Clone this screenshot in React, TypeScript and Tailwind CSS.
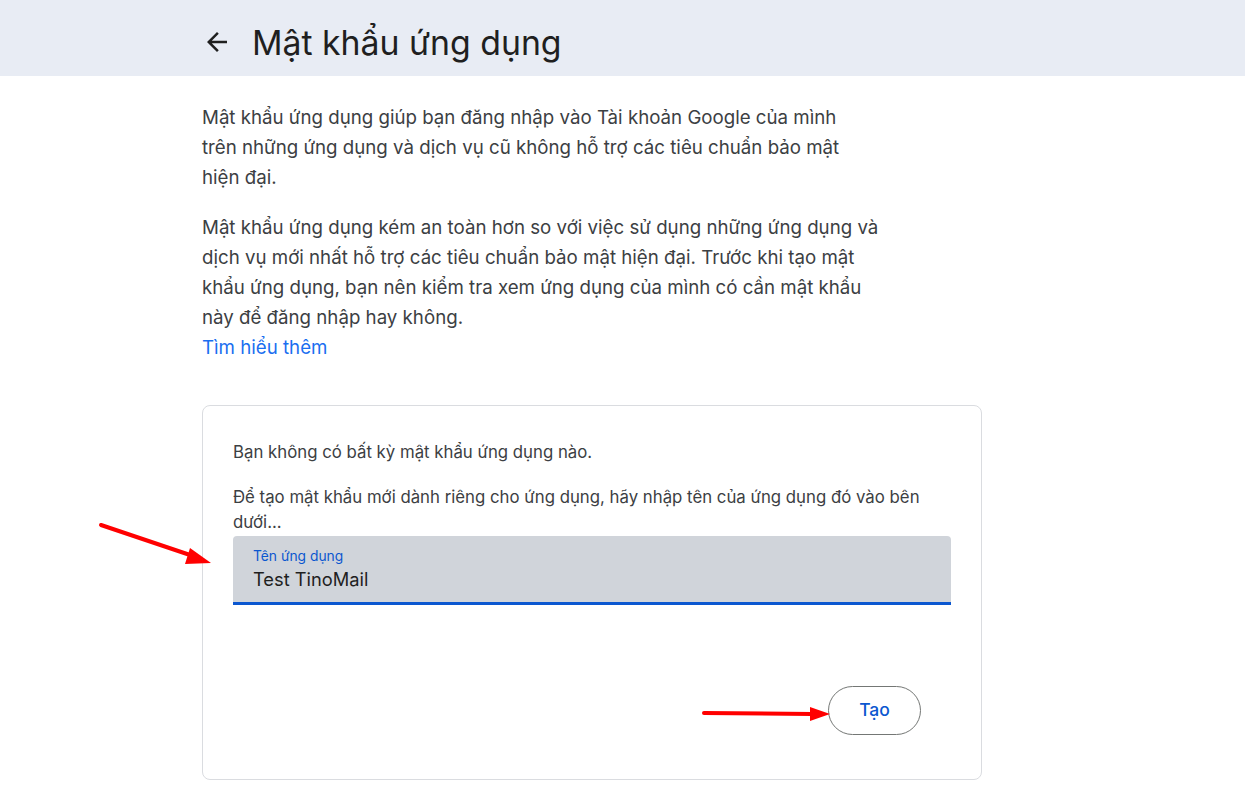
import React from "react";

export default function App() {
  return (
    <div className="relative min-h-[797px] w-full bg-white" style={{ fontFamily: "Inter, Roboto, 'Liberation Sans', sans-serif" }}>
      <header className="h-[76px] bg-[#e8ecf4] flex items-center pl-[202px]">
        <svg width="30" height="30" viewBox="0 0 24 24" className="mr-[20px] mt-[8px]" fill="#1f1f1f">
          <path d="M20 11H7.83l5.59-5.59L12 4l-8 8 8 8 1.41-1.41L7.83 13H20v-2z" />
        </svg>
        <h1 className="text-[33.8px] leading-none text-[#1f1f1f] mt-[10px]">
          Mật khẩu ứng dụng
        </h1>
      </header>

      <main className="pl-[202px] pt-[27px]">
        <div className="w-[694px] text-[18.7px] leading-[30px] text-[#3c4043]">
          <p>
            Mật khẩu ứng dụng giúp bạn đăng nhập vào Tài khoản Google của mình
            <br />
            trên những ứng dụng và dịch vụ cũ không hỗ trợ các tiêu chuẩn bảo mật
            <br />
            hiện đại.
          </p>
          <p className="mt-[20px]">
            Mật khẩu ứng dụng kém an toàn hơn so với việc sử dụng những ứng dụng và dịch vụ mới nhất hỗ trợ các tiêu chuẩn bảo mật hiện đại. Trước khi tạo mật khẩu ứng dụng, bạn nên kiểm tra xem ứng dụng của mình có cần mật khẩu này để đăng nhập hay không.
          </p>
          <a className="text-[#1a6ef0] block">Tìm hiểu thêm</a>
        </div>

        <section className="mt-[42px] w-[780px] h-[375px] border border-[#dadce0] rounded-[8px] px-[30px] pt-[34px]">
          <p className="text-[16.8px] leading-[25px] text-[#3c4043]">Bạn không có bất kỳ mật khẩu ứng dụng nào.</p>
          <p className="mt-[20px] text-[16.8px] leading-[25px] text-[#3c4043] w-[700px]">
            Để tạo mật khẩu mới dành riêng cho ứng dụng, hãy nhập tên của ứng dụng đó vào bên dưới...
          </p>
          <div className="mt-[1px] w-[718px] h-[69px] bg-[#d0d4da] rounded-t-[4px] border-b-[3px] border-[#0b57d0] pl-[20px] pt-[11px]">
            <div className="text-[13.8px] leading-[18px] text-[#0b57d0]">Tên ứng dụng</div>
            <div className="text-[18.3px] leading-[26px] text-[#1f1f1f] mt-[1px]">Test TinoMail</div>
          </div>
          <div className="flex justify-end w-[688px] mt-[81px]">
            <button className="w-[93px] h-[49px] rounded-full border border-[#747775] text-[#0b57d0] text-[17.5px] font-medium">
              Tạo
            </button>
          </div>
        </section>
      </main>

      <svg className="absolute left-0 top-0 pointer-events-none" width="1245" height="797">
        <line x1="101" y1="525" x2="196" y2="557" stroke="#ff0000" strokeWidth="4" strokeLinecap="round" />
        <polygon points="211,563 190,548 185,564" fill="#ff0000" />
        <line x1="704" y1="713" x2="812" y2="714" stroke="#ff0000" strokeWidth="4" strokeLinecap="round" />
        <polygon points="830,714 810,707 810,721" fill="#ff0000" />
      </svg>
    </div>
  );
}
